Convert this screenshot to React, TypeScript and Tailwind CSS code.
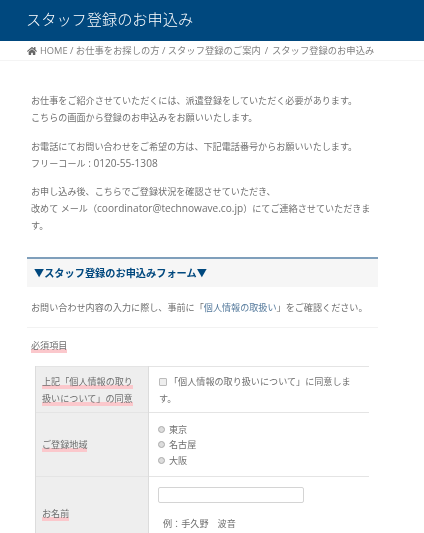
import { FaHome } from 'react-icons/fa';

const font = { fontFamily: '"Open Sans", "Noto Sans CJK JP", sans-serif' };

function Mark({ children }: { children: React.ReactNode }) {
  return <span className="bg-[linear-gradient(transparent_72%,#fbc8cc_72%)] pb-[1px]">{children}</span>;
}

export default function App() {
  return (
    <div style={font} className="h-[533px] w-[424px] overflow-hidden bg-white text-[9.1px] leading-[17px] text-[#6f6f6f] blur-[0.35px]">
      {/* Title bar */}
      <header className="flex h-[41px] items-center bg-[#00487e] pl-[26px] pb-[2px] text-[15.2px] font-light text-white">
        スタッフ登録のお申込み
      </header>

      {/* Breadcrumb */}
      <nav className="flex h-[20px] items-center gap-[3px] border-b border-[#f4f4f4] pl-[27px] text-[9.3px] text-[#808080]">
        <FaHome className="h-[10px] w-[10px] text-[#666]" />
        <span className="whitespace-nowrap">HOME / お仕事をお探しの方 / スタッフ登録のご案内<span className="mx-[1.5px]"> / </span>スタッフ登録のお申込み</span>
      </nav>

      <main className="pl-[27px] pr-[46px] pt-[31px]">
        <div className="pl-[4px]">
          <p>お仕事をご紹介させていただくには、派遣登録をしていただく必要があります。<br />こちらの画面から登録のお申込みをお願いいたします。</p>
          <p className="mt-[12px]">お電話にてお問い合わせをご希望の方は、下記電話番号からお願いいたします。<br />フリーコール<span className="text-[10.1px]"> : 0120-55-1308</span></p>
          <p className="mt-[11px]">お申し込み後、こちらでご登録状況を確認させていただき、<br />改めて メール（<span className="text-[10.1px]">coordinator@technowave.co.jp</span>）にてご連絡させていただきま<br />す。</p>
        </div>

        {/* Form heading */}
        <h2 className="mt-[23px] flex h-[30px] items-center border-t-2 border-[#7f9fbb] bg-[#f6f6f6] pl-[7px] pt-[1px] text-[10.2px] font-bold text-[#00487e]">
          ▼スタッフ登録のお申込みフォーム▼
        </h2>
        <p className="flex h-[41px] items-center whitespace-nowrap border-b border-[#f2f2f2] pl-[4px]">
          お問い合わせ内容の入力に際し、事前に「<span className="text-[#557a9c]">個人情報の取扱い</span>」をご確認ください。
        </p>

        <p className="mt-[9px] pl-[4px]"><Mark>必須項目</Mark></p>

        {/* Form table */}
        <table className="ml-[8px] mt-[12px] w-[334px] table-fixed border-collapse">
          <tbody>
            <tr className="h-[46px] border-t border-b border-[#e4e4e4]">
              <th className="w-[113px] border-x border-[#dcdcdc] bg-[#eeeeee] pl-[6px] text-left font-normal"><Mark>上記「個人情報の取り</Mark><br /><Mark>扱いについて」の同意</Mark></th>
              <td className="pl-[10px] pr-[12px] align-middle">
                <input type="checkbox" className="mr-[2px] h-[8px] w-[8px] translate-y-[1px] appearance-none rounded-[1px] border border-[#bbb] bg-[#eee]" />
                「個人情報の取り扱いについて」に同意します。
              </td>
            </tr>
            <tr className="h-[64px] border-b border-[#e4e4e4]">
              <th className="border-x border-[#dcdcdc] bg-[#eeeeee] pl-[6px] text-left font-normal"><Mark>ご登録地域</Mark></th>
              <td className="pl-[9px]">
                <div className="flex flex-col">
                  {['東京', '名古屋', '大阪'].map((area) => (
                    <label key={area} className="flex h-[15.5px] items-center gap-[4px]">
                      <span className="h-[7px] w-[7px] rounded-full border border-[#aaa] bg-[#ddd]" />
                      {area}
                    </label>
                  ))}
                </div>
              </td>
            </tr>
            <tr className="h-[75px]">
              <th className="border-x border-[#dcdcdc] bg-[#eeeeee] pl-[6px] pb-[2px] text-left font-normal"><Mark>お名前</Mark></th>
              <td className="pl-[9px] align-top">
                <input type="text" className="mt-[10px] block h-[16px] w-[146px] rounded-[2px] border border-[#d4d4d4] bg-white" />
                <p className="mt-[12px] pl-[5px]">例：手久野　波音</p>
              </td>
            </tr>
          </tbody>
        </table>
      </main>
    </div>
  );
}
